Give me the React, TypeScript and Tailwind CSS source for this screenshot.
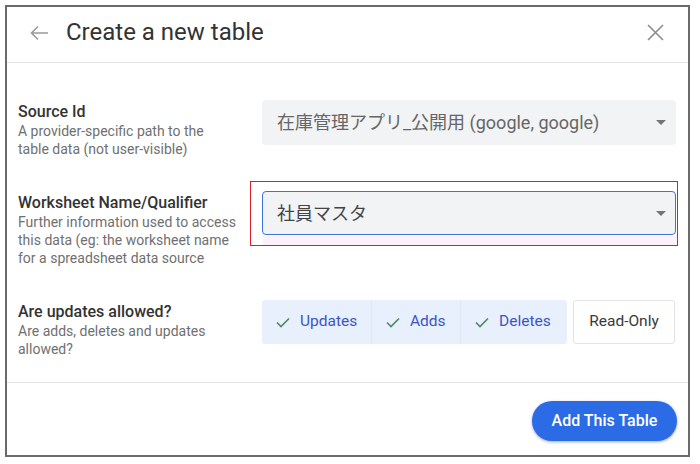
import React from 'react';

const font = { fontFamily: 'Roboto, "Noto Sans CJK JP", "Noto Sans", sans-serif' };

const Caret = () => (
  <svg width="10" height="5" viewBox="0 0 10 5" className="shrink-0">
    <path d="M0 0 L10 0 L5 5 Z" fill="#757575" />
  </svg>
);

const Check = () => (
  <svg width="14" height="11" viewBox="0 0 14 11" className="shrink-0">
    <polyline points="1,5.5 5,9.5 13,1.5" fill="none" stroke="#4f8a5f" strokeWidth="1.6" />
  </svg>
);

const FieldLabel: React.FC<{ title: string; lines: string[] }> = ({ title, lines }) => (
  <div className="w-[244px] shrink-0 pt-[3px]">
    <div className="text-[16px] font-medium leading-[18px] text-[#333333]">{title}</div>
    <div className="mt-[1px] text-[14px] leading-[18px] text-[#707070]">
      {lines.map((l) => (
        <div key={l}>{l}</div>
      ))}
    </div>
  </div>
);

const Segment: React.FC<{ label: string; last?: boolean }> = ({ label, last }) => (
  <div
    className={`flex h-full items-center gap-[10px] px-[14px] text-[15.5px] text-[#3d55c4] ${
      last ? '' : 'border-r border-[#dfe6f6]'
    }`}
  >
    <Check />
    <span>{label}</span>
  </div>
);

export default function App() {
  return (
    <div className="h-[464px] w-[700px] bg-white pl-[5px] pt-[5px]" style={font}>
      <div className="flex h-[452px] w-[685px] flex-col border-2 border-[#6a6a6a] bg-white">
        {/* header */}
        <div className="flex h-[56px] shrink-0 items-center border-b border-[#e6e6e6] pb-[6px] pl-[23px] pr-[24px]">
          <svg width="19" height="16" viewBox="0 0 19 16" className="mt-[2px]">
            <path d="M18 8 H2 M8 1.5 L1.5 8 L8 14.5" fill="none" stroke="#9a9a9a" strokeWidth="1.6" />
          </svg>
          <div className="ml-[17px] text-[24px] leading-none text-[#333333]">Create a new table</div>
          <div className="flex-1" />
          <svg width="17" height="17" viewBox="0 0 17 17" className="mt-[2px]">
            <path d="M1 1 L16 16 M16 1 L1 16" fill="none" stroke="#8c8c8c" strokeWidth="1.6" />
          </svg>
        </div>

        {/* body */}
        <div className="flex flex-col gap-[33px] border-b border-[#e6e6e6] pb-[24px] pl-[11px] pr-[12px] pt-[37px]">
          <div className="flex items-start">
            <FieldLabel
              title="Source Id"
              lines={['A provider-specific path to the', 'table data (not user-visible)']}
            />
            <div className="flex h-[45px] w-[414px] items-center rounded-[4px] bg-[#f1f3f4] pl-[15px] pr-[10px]">
              <span className="flex-1 text-[18px] text-[#666666]">在庫管理アプリ_公開用 (google, google)</span>
              <Caret />
            </div>
          </div>

          <div className="flex items-start">
            <FieldLabel
              title="Worksheet Name/Qualifier"
              lines={['Further information used to access', 'this data (eg: the worksheet name', 'for a spreadsheet data source']}
            />
            <div className="relative w-[414px]">
              <div className="pointer-events-none absolute -left-[12px] -top-[10px] h-[65px] w-[428px] border-[1.5px] border-[#dc1f26] bg-white">
                <div className="absolute bottom-0 left-[12px] right-0 h-[9px] bg-[#fcf1fb]" />
              </div>
              <div className="relative flex h-[44px] items-center rounded-[4px] border-[1.5px] border-[#3d72d8] bg-[#f1f3f4] pl-[14px] pr-[9px]">
                <span className="flex-1 text-[18px] text-[#444444]">社員マスタ</span>
                <Caret />
              </div>
            </div>
          </div>

          <div className="flex items-start">
            <FieldLabel
              title="Are updates allowed?"
              lines={['Are adds, deletes and updates', 'allowed?']}
            />
            <div className="flex h-[44px] w-[414px] items-stretch gap-[6px]">
              <div className="flex h-full w-[305px] items-center rounded-[3px] bg-[#e8effd]">
                <div className="w-[110px] h-full"><Segment label="Updates" /></div>
                <div className="w-[89px] h-full"><Segment label="Adds" /></div>
                <div className="w-[106px] h-full"><Segment label="Deletes" last /></div>
              </div>
              <div className="flex h-full w-[102px] items-center justify-center rounded-[3px] border border-[#e3e3e3] bg-white text-[15.5px] text-[#3a3a3a]">
                Read-Only
              </div>
            </div>
          </div>
        </div>

        {/* footer */}
        <div className="flex justify-end pr-[11px] pt-[18px]">
          <button className="flex h-[40px] w-[145px] items-center justify-center rounded-full bg-[#2b6ce6] text-[16px] font-medium text-white shadow-[0_1px_3px_rgba(40,60,160,0.45)]">
            Add This Table
          </button>
        </div>
      </div>
    </div>
  );
}
